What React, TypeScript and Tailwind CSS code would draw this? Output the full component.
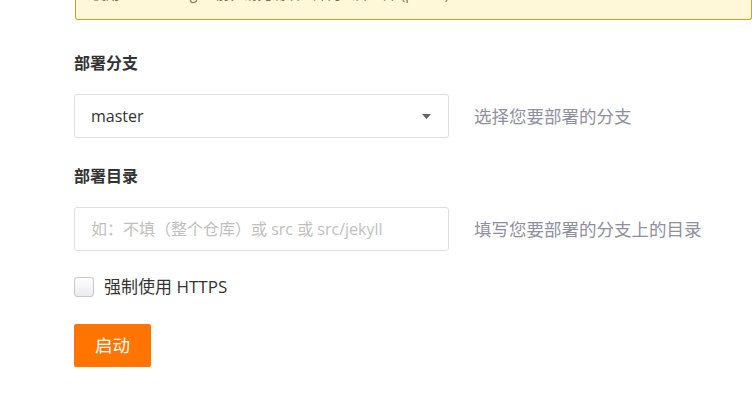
import { useState } from 'react';

const App = () => {
  const [https, setHttps] = useState(false);

  return (
    <div className="min-h-screen bg-white font-['Open_Sans','Noto_Sans_CJK_SC',sans-serif] text-[#333]">
      <div className="pl-[74px]">
        <div className="-mt-[20px] ml-px h-[40px] overflow-hidden rounded-b-[3px] border border-t-0 border-[#c9a227] bg-[#fff8d8] px-4 pt-[5px] text-[14px] leading-[18px] text-[#8a6d3b]">
          使用 GitHub Pages 前，请先确认仓库为公开仓库 (public)
        </div>

        <div className="pt-[33px] text-[16px] font-bold leading-[20px]">部署分支</div>
        <div className="mt-[21px] flex items-center gap-[25px]">
          <div className="flex h-[44px] w-[375px] items-center justify-between rounded-[3px] border border-[#dcdfe6] pl-[16px] pr-[17px] text-[16px]">
            <span>master</span>
            <svg width="9" height="5" viewBox="0 0 9 5">
              <path d="M0 0h9L4.5 5z" fill="#606266" />
            </svg>
          </div>
          <span className="text-[17.5px] text-[#8f909e]">选择您要部署的分支</span>
        </div>

        <div className="pt-[28px] text-[16px] font-bold leading-[20px]">部署目录</div>
        <div className="mt-[21px] flex items-center gap-[25px]">
          <input
            className="h-[44px] w-[375px] rounded-[3px] border border-[#dcdfe6] px-[16px] text-[16px] outline-none placeholder:text-[#bfbfbf]"
            placeholder="如：不填（整个仓库）或 src 或 src/jekyll"
          />
          <span className="text-[17.5px] text-[#8f909e]">填写您要部署的分支上的目录</span>
        </div>

        <label className="mt-[23px] flex cursor-pointer items-center gap-[10px] text-[17px]">
          <input
            type="checkbox"
            checked={https}
            onChange={(e) => setHttps(e.target.checked)}
            className="h-[20px] w-[20px] appearance-none rounded-[3px] border border-[#c8c8cc] bg-gradient-to-b from-white to-[#ebebef] checked:bg-[#ff7500]"
          />
          强制使用 HTTPS
        </label>

        <button className="mt-[24px] h-[43px] w-[77px] rounded-[2px] bg-[#ff7500] text-[17.5px] text-white">
          启动
        </button>
      </div>
    </div>
  );
};

export default App;
